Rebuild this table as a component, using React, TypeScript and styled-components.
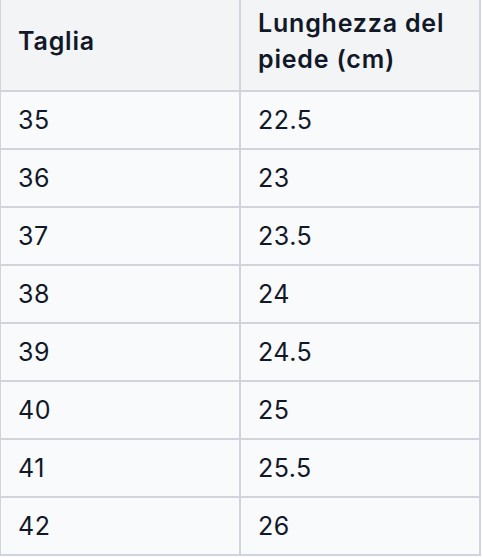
import React from "react";
import styled, { createGlobalStyle } from "styled-components";

const Global = createGlobalStyle`
  html, body { margin: 0; padding: 0; background: #ffffff; }
  body { font-family: Inter, "Noto Sans", "Liberation Sans", sans-serif; }
`;

const Table = styled.table`
  width: 481px;
  border-collapse: separate;
  border-spacing: 0;
  table-layout: fixed;
  border-left: 1px solid #d1d5db;
  font-family: Inter, "Noto Sans", "Liberation Sans", sans-serif;
  font-size: 25px;
  line-height: 36px;
  color: #111827;
`;

const Col = styled.col<{ $w: number }>`
  width: ${(p) => p.$w}px;
`;

const HeadCell = styled.th`
  background: #f3f4f6;
  font-weight: 600;
  letter-spacing: 0.8px;
  text-align: left;
  vertical-align: middle;
  padding: 5px 10px 13px 17px;
  height: 72px;
  border-right: 2px solid #d1d5db;
  border-bottom: 2px solid #d1d5db;
`;

const Cell = styled.td`
  background: #f9fafb;
  font-weight: 400;
  letter-spacing: 0.5px;
  text-align: left;
  vertical-align: middle;
  padding: 10px 18px 10px 17px;
  height: 36px;
  border-right: 2px solid #d1d5db;
  border-bottom: 2px solid #d1d5db;
`;

const rows: [string, string][] = [
  ["35", "22.5"],
  ["36", "23"],
  ["37", "23.5"],
  ["38", "24"],
  ["39", "24.5"],
  ["40", "25"],
  ["41", "25.5"],
  ["42", "26"],
];

export default function App() {
  return (
    <>
      <Global />
      <Table>
        <colgroup>
          <Col $w={240} />
          <Col $w={240} />
        </colgroup>
        <thead>
          <tr>
            <HeadCell>Taglia</HeadCell>
            <HeadCell>Lunghezza del piede (cm)</HeadCell>
          </tr>
        </thead>
        <tbody>
          {rows.map(([size, len]) => (
            <tr key={size}>
              <Cell>{size}</Cell>
              <Cell>{len}</Cell>
            </tr>
          ))}
        </tbody>
      </Table>
    </>
  );
}
